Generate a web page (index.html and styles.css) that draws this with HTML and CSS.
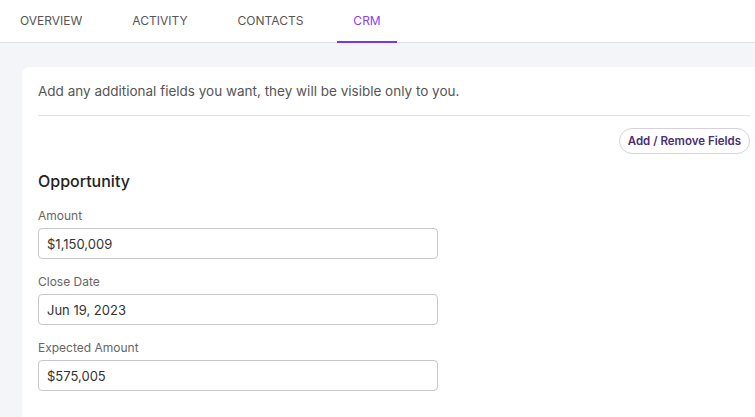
FILE: index.html
```html
<!DOCTYPE html>
<html>
<head>
  <title>CRM</title>
  <link rel="stylesheet" href="styles.css">
</head>
<body>
  <div class="tabs">
    <div class="tab">OVERVIEW</div>
    <div class="tab">ACTIVITY</div>
    <div class="tab">CONTACTS</div>
    <div class="tab active">CRM</div>
  </div>

  <div class="content">
    <div class="card">
      <p class="intro">Add any additional fields you want, they will be visible only to you.</p>
      <hr class="divider">
      <div class="actions">
        <button type="button" class="pill">Add / Remove Fields</button>
      </div>

      <h2 class="section-title">Opportunity</h2>

      <div class="field">
        <label for="amount">Amount</label>
        <input type="text" id="amount" value="$1,150,009">
      </div>
      <div class="field">
        <label for="closedate">Close Date</label>
        <input type="text" id="closedate" value="Jun 19, 2023">
      </div>
      <div class="field">
        <label for="expected">Expected Amount</label>
        <input type="text" id="expected" value="$575,005">
      </div>
    </div>
  </div>
</body>
</html>
```

FILE: styles.css
```css
body {
  margin: 0;
  font-family: Inter, "Noto Sans", sans-serif;
  background-color: #f4f5f9;
  overflow: hidden;
}

.tabs {
  display: flex;
  gap: 18px;
  padding-left: 4px;
  height: 42px;
  background-color: #fff;
  border-bottom: 1px solid #dfdfe6;
}

.tab {
  display: flex;
  align-items: center;
  padding: 0 16px;
  font-size: 12px;
  color: #555;
  border-bottom: 2px solid transparent;
  margin-bottom: -1px;
}

.tab.active {
  color: #8a3ff0;
  border-bottom-color: #7b36e6;
}

.content {
  padding: 24px 0 0 22px;
}

.card {
  width: 712px;
  min-height: 400px;
  padding: 14px 16px;
  background-color: #fff;
  border-radius: 8px;
}

.intro {
  margin: 0;
  font-size: 13.5px;
  line-height: 20px;
  color: #555;
}

.divider {
  margin: 14px 0 12px;
  border: none;
  border-top: 1px solid #e2e2e6;
}

.actions {
  display: flex;
  justify-content: flex-end;
}

.pill {
  height: 26px;
  padding: 0 8px;
  font-family: inherit;
  font-size: 11.5px;
  font-weight: 600;
  color: #4a2f78;
  background-color: #fff;
  border: 1px solid #d6d0e2;
  border-radius: 13px;
}

.section-title {
  margin: 15px 0 15px;
  font-size: 16px;
  line-height: 24px;
  font-weight: 500;
  color: #222;
}

.field {
  display: flex;
  flex-direction: column;
  gap: 4px;
  margin-bottom: 15px;
}

.field label {
  font-size: 12px;
  line-height: 16px;
  color: #666;
}

.field input {
  box-sizing: border-box;
  width: 400px;
  height: 31px;
  padding: 0 8px;
  font-family: inherit;
  font-size: 13px;
  color: #333;
  border: 1px solid #c8c8cc;
  border-radius: 4px;
}
```
